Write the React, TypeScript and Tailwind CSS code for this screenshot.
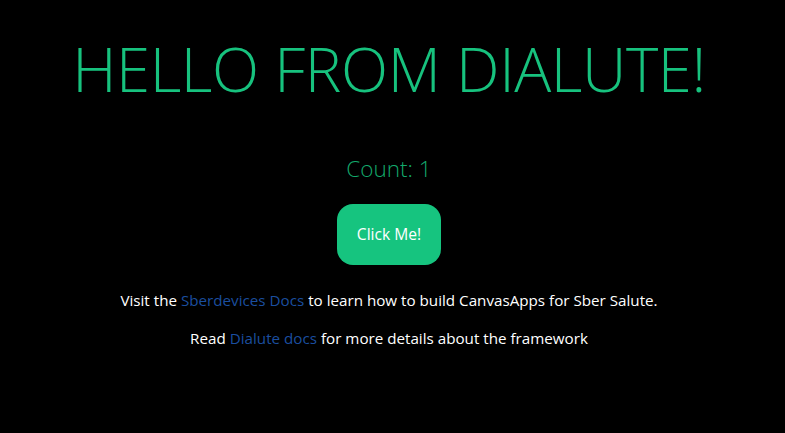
import { useState } from 'react';

export default function App(): React.ReactElement {
  const [count, setCount] = useState(1);

  return (
    <div className="min-h-[433px] w-full bg-black">
      <div className="flex w-[778px] flex-col items-center pt-[28px] font-['Open_Sans',sans-serif] text-white">
        <h1 className="text-[61.6px] leading-[80px] font-light tracking-[-0.4px] text-[#17c27e]">
          HELLO FROM DIALUTE!
        </h1>
        <p className="mt-[46px] text-[22.5px] leading-[30px] font-light text-[#13a96c]">
          Count: {count}
        </p>
        <button
          type="button"
          onClick={() => setCount(count + 1)}
          className="mt-[20px] h-[61px] w-[104px] rounded-[16px] bg-[#16c47f] text-[15.6px] text-white"
        >
          Click Me!
        </button>
        <p className="mt-[24px] text-[15.2px] leading-[22px]">
          Visit the{' '}
          <a href="#" className="text-[#1b4e9f]">
            Sberdevices Docs
          </a>{' '}
          to learn how to build CanvasApps for Sber Salute.
        </p>
        <p className="mt-[16px] text-[15.2px] leading-[22px]">
          Read{' '}
          <a href="#" className="text-[#1b4e9f]">
            Dialute docs
          </a>{' '}
          for more details about the framework
        </p>
      </div>
    </div>
  );
}
